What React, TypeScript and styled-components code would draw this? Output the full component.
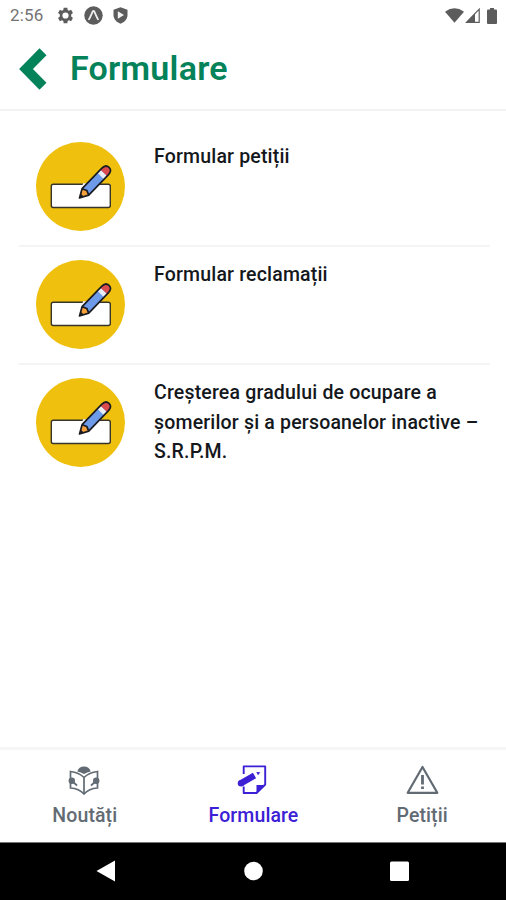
import React from 'react';
import styled, { createGlobalStyle } from 'styled-components';

interface TabProps {
  $active?: boolean,
}

const GlobalStyle = createGlobalStyle`
  * {
    box-sizing: border-box;
  }

  body {
    margin: 0;
    background-color: #fff;
    font-family: Roboto, "Noto Sans", sans-serif;
  }
`;

const Screen = styled.div`
  display: flex;
  flex-direction: column;
  width: 506px;
  height: 900px;
  overflow: hidden;
  background-color: #fff;
`;

const StatusBar = styled.div`
  display: flex;
  justify-content: space-between;
  align-items: center;
  height: 32px;
  padding: 0 9px 1px 10px;
  color: #5c5c5c;
`;

const StatusGroup = styled.div<{ $gap: string }>`
  display: flex;
  align-items: center;
  gap: ${({ $gap }) => $gap};

  svg {
    display: block;
  }
`;

const Clock = styled.span`
  width: 37px;
  font-size: 17px;
  line-height: 31px;
  letter-spacing: 0.2px;
  color: #737373;
`;

const Header = styled.header`
  display: flex;
  align-items: center;
  height: 79px;
  padding: 0 19px 5px;
  gap: 22px;
  border-bottom: 2px solid #f3f3f3;
`;

const BackBtn = styled.button`
  display: flex;
  padding: 2px 0 0;
  border: none;
  background: none;
  cursor: pointer;
`;

const Title = styled.h1`
  margin: 0;
  font-size: 34px;
  line-height: 40px;
  font-weight: 600;
  letter-spacing: 0.25px;
  color: #04825a;
`;

const List = styled.main`
  display: flex;
  flex-direction: column;
  flex: 1;
  padding: 17px 16px 0 19px;
`;

const ListItem = styled.div`
  display: flex;
  gap: 28px;
  height: 117px;
  padding: 14px 0 0 17px;

  & + & {
    height: 118px;
    padding-top: 13px;
    border-top: 2px solid #f4f4f4;
  }
`;

const Thumb = styled.svg`
  flex: none;
  width: 90px;
  height: 90px;
`;

const ItemText = styled.div`
  font-size: 19.5px;
  line-height: 29.5px;
  font-weight: 500;
  letter-spacing: 0.18px;
  color: #14181c;
  white-space: pre-line;
`;

const TabBar = styled.nav`
  display: grid;
  grid-template-columns: repeat(3, 1fr);
  height: 95px;
  border-top: 3px solid #f6f6f6;
`;

const Tab = styled.div<TabProps>`
  display: flex;
  flex-direction: column;
  align-items: center;
  padding-top: 13px;
  gap: 7px;
  color: ${({ $active }) => ($active ? '#3b20d5' : '#626b73')};
`;

const TabLabel = styled.span`
  padding-left: 1px;
  font-size: 19.5px;
  line-height: 24px;
  font-weight: 500;
  letter-spacing: 0.1px;
`;

const SystemNav = styled.div`
  display: flex;
  justify-content: space-between;
  height: 58px;
  padding: 16px 96px 0;
  border-top: 1px solid #777;
  background-color: #000;
`;

const GearIcon = () => (
  <svg width="17" height="17" viewBox="0 0 24 24" fill="currentColor">
    <path
      fillRule="evenodd"
      d="M9.4 1h5.2l.5 3.2 1.8 1 3-1.2 2.6 4.5-2.5 2v3l2.5 2-2.6 4.5-3-1.2-1.8 1-.5 3.2H9.4l-.5-3.2-1.8-1-3 1.2-2.6-4.5 2.5-2v-3l-2.5-2L4.1 4l3 1.2 1.8-1zM12 7.6a4.4 4.4 0 1 0 0 8.8 4.4 4.4 0 0 0 0-8.8z"
    />
  </svg>
);

const ExpoIcon = () => (
  <svg width="19" height="19" viewBox="0 0 19 19">
    <circle cx="9.5" cy="9.5" r="9.2" fill="currentColor" />
    <path
      d="M5 13.2C6.5 11 7.5 8 8.6 5.6q.9-1.3 1.8 0C11.5 8 12.5 11 14 13.2"
      fill="none"
      stroke="#eee"
      strokeWidth="1.8"
      strokeLinecap="round"
    />
  </svg>
);

const ShieldIcon = () => (
  <svg width="15" height="17" viewBox="0 0 15 17">
    <path d="M7.5.3L14.5 2.8V8C14.5 12 11.5 15.4 7.5 16.7C3.5 15.4.5 12 .5 8V2.8z" fill="currentColor" />
    <path d="M4.8 4.2L11 8L4.8 11.8z" fill="#f4f4f4" />
  </svg>
);

const WifiIcon = () => (
  <svg width="19" height="15" viewBox="0 0 18 15" preserveAspectRatio="none">
    <path d="M0 3.7Q9-3 18 3.7L9 14.8z" fill="currentColor" />
  </svg>
);

const SignalIcon = () => (
  <svg width="15" height="15" viewBox="0 0 15 15">
    <path d="M1.5 14.3L14.2 1.2V14.3z" fill="none" stroke="currentColor" strokeWidth="1.2" />
    <path d="M1 14.5L10 5.3V14.5z" fill="currentColor" />
  </svg>
);

const BatteryIcon = () => (
  <svg width="10" height="16" viewBox="0 0 10 16" fill="currentColor">
    <rect x="3" width="4" height="3" />
    <rect y="1.5" width="10" height="14.5" rx="1" />
  </svg>
);

const BackIcon = () => (
  <svg width="29" height="42" viewBox="0 0 29 42">
    <path d="M24 3.8L7 21L24 38.2" fill="none" stroke="#04825a" strokeWidth="9.8" />
  </svg>
);

const FormThumb = () => (
  <Thumb viewBox="0 0 90 90">
    <circle cx="44.5" cy="44.5" r="44.5" fill="#efc10e" />
    <rect x="15.3" y="42.3" width="59" height="23.2" rx="2" fill="#fff" stroke="#37352a" strokeWidth="1.4" />
    <path d="M47 41.3H63V47L53 52L44 55z" fill="#fff" />
    <g transform="translate(43.5 56) rotate(-46)">
      <path d="M0 0L8.5-4.6H37Q42.5-4.6 42.5 0T37 4.6H8.5z" fill="#6d9bea" />
      <path d="M0 0L8.5-4.6L10.5 0L8.5 4.6z" fill="#f7a13b" />
      <path d="M0 0L4-2V2z" fill="#1b1b22" />
      <rect x="30.5" y="-4.6" width="4.5" height="9.2" fill="#e9eef5" />
      <path d="M35-4.6H37Q42.5-4.6 42.5 0T37 4.6H35z" fill="#dc4c4f" />
      <path
        d="M0 0L8.5-4.6H37Q42.5-4.6 42.5 0T37 4.6H8.5zM8.5-4.6L10.5 0L8.5 4.6"
        fill="none"
        stroke="#1b1b22"
        strokeWidth="1.7"
        strokeLinejoin="round"
      />
    </g>
  </Thumb>
);

const ReaderIcon = () => (
  <svg width="34" height="34" viewBox="0 0 34 34" fill="none" stroke="currentColor" strokeWidth="1.7">
    <path d="M10.3 8.5A7 7 0 0 1 23.7 8.5Q20 9 17 11Q14 9 10.3 8.500z" fill="currentColor" stroke="none" />
    <path d="M3.5 15V8.500Q12 9.500 17 14.500Q22 9.500 30.500 8.500V15M17 14.500V30" />
    <path d="M3.500 20V25Q12 25.500 17 31Q22 25.500 30.500 25V20" />
    <path d="M5 18L10 22.500M29 18L24 22.500" />
    <circle cx="4.800" cy="17.800" r="3.200" fill="currentColor" stroke="none" />
    <circle cx="29.200" cy="17.800" r="3.200" fill="currentColor" stroke="none" />
  </svg>
);

const FormIcon = () => (
  <svg width="34" height="34" viewBox="0 0 34 34">
    <path
      d="M7.7 11V3.4H29.2V21.5L20.5 30H7.7V23.5"
      fill="none"
      stroke="currentColor"
      strokeWidth="1.9"
      strokeLinejoin="round"
    />
    <path d="M20.5 22H29.5L20.5 31z" fill="currentColor" />
    <path d="M5 20.3L18.5 12.5" stroke="currentColor" strokeWidth="6.4" />
    <circle cx="5" cy="20.3" r="3.2" fill="currentColor" />
    <path d="M20.3 9L24.3 9.2L22 12.3z" fill="currentColor" />
  </svg>
);

const WarningIcon = () => (
  <svg width="34" height="34" viewBox="0 0 34 34" fill="none" stroke="currentColor">
    <path d="M17.5 4L32.3 29.8H2.7z" strokeWidth="2.2" strokeLinejoin="round" />
    <path d="M17.5 12V21.5M17.5 23.5V26" strokeWidth="2.8" />
  </svg>
);

const items = [
  'Formular petiții',
  'Formular reclamații',
  'Creșterea gradului de ocupare a\nșomerilor și a persoanelor inactive –\nS.R.P.M.',
];

const tabs = [
  { label: 'Noutăți', icon: <ReaderIcon /> },
  { label: 'Formulare', icon: <FormIcon />, active: true },
  { label: 'Petiții', icon: <WarningIcon /> },
];

const App = () => (
  <>
    <GlobalStyle />
    <Screen>
      <StatusBar>
        <StatusGroup $gap="10px">
          <Clock>2:56</Clock>
          <GearIcon />
          <ExpoIcon />
          <ShieldIcon />
        </StatusGroup>
        <StatusGroup $gap="7px">
          <StatusGroup $gap="1px">
            <WifiIcon />
            <SignalIcon />
          </StatusGroup>
          <BatteryIcon />
        </StatusGroup>
      </StatusBar>
      <Header>
        <BackBtn aria-label="Înapoi">
          <BackIcon />
        </BackBtn>
        <Title>Formulare</Title>
      </Header>
      <List>
        {items.map((text) => (
          <ListItem key={text}>
            <FormThumb />
            <ItemText>{text}</ItemText>
          </ListItem>
        ))}
      </List>
      <TabBar>
        {tabs.map(({ label, icon, active }) => (
          <Tab key={label} $active={active}>
            {icon}
            <TabLabel>{label}</TabLabel>
          </Tab>
        ))}
      </TabBar>
      <SystemNav>
        <svg width="20" height="24" viewBox="0 0 20 24">
          <path d="M.5 12L19 1.5V22.5z" fill="#fff" />
        </svg>
        <svg width="20" height="24" viewBox="0 0 20 24">
          <circle cx="10.5" cy="12" r="9.3" fill="#fff" />
        </svg>
        <svg width="20" height="24" viewBox="0 0 20 24">
          <rect x="0" y="2.5" width="19" height="19.5" rx="1.5" fill="#fff" />
        </svg>
      </SystemNav>
    </Screen>
  </>
);

export default App;
